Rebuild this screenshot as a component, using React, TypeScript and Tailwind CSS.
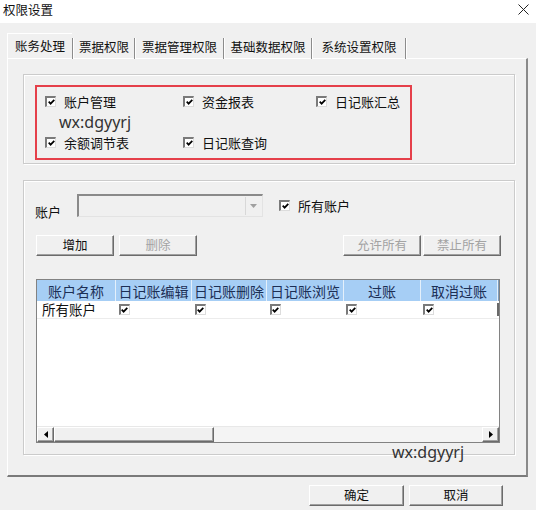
import React from 'react';

const raised =
  'border border-t-white border-l-white border-r-[#6b6b6b] border-b-[#6b6b6b] shadow-[inset_-1px_-1px_0_#a0a0a0]';

const Check: React.FC = () => (
  <span className="inline-flex shrink-0 w-[11px] h-[11px] items-center justify-center bg-white border-t-2 border-l-2 border-r border-b border-t-[#7a7a7a] border-l-[#7a7a7a] border-r-[#dcdcdc] border-b-[#dcdcdc]">
    <svg width="7" height="6" viewBox="0 0 7 6">
      <path d="M0.7 2.7 L2.6 4.7 L6.3 0.8" fill="none" stroke="#000" strokeWidth="1.7" />
    </svg>
  </span>
);

const CheckItem: React.FC<{ label: string; w?: string }> = ({ label, w = '' }) => (
  <div className={`flex items-center gap-[8px] ${w}`}>
    <Check />
    <span className="text-[13px] leading-none text-[#111]">{label}</span>
  </div>
);

const Btn: React.FC<{ label: string; disabled?: boolean; w: string }> = ({ label, disabled, w }) => (
  <div
    className={`${raised} ${w} h-[21px] flex items-center justify-center text-[12.5px] leading-none ${
      disabled ? 'text-[#a3a3a3]' : 'text-[#111]'
    }`}
  >
    {label}
  </div>
);

const TABS = [
  { t: '账务处理', w: 'w-[65px]' },
  { t: '票据权限', w: 'w-[60px]' },
  { t: '票据管理权限', w: 'w-[87px]' },
  { t: '基础数据权限', w: 'w-[86px]' },
  { t: '系统设置权限', w: 'w-[92px]' },
];

const COLS = [
  { t: '账户名称', w: 'w-[79px]' },
  { t: '日记账编辑', w: 'w-[76px]' },
  { t: '日记账删除', w: 'w-[75px]' },
  { t: '日记账浏览', w: 'w-[77px]' },
  { t: '过账', w: 'w-[77px]' },
  { t: '取消过账', w: 'w-[77px]' },
];

export default function App() {
  return (
    <div className="relative w-[536px] h-[510px] overflow-hidden bg-[#f0f0f0] font-['Noto_Sans_CJK_SC',sans-serif] text-[#111]">
      {/* title bar */}
      <div className="h-[23px] bg-white flex items-start justify-between pl-[3px] pr-[7px] pt-[3px]">
        <span className="text-[12.5px] leading-[14px]">权限设置</span>
        <svg width="11" height="11" viewBox="0 0 11 11" className="mt-[1px]">
          <path d="M0.5 0.5 L10.5 10.5 M10.5 0.5 L0.5 10.5" stroke="#222" strokeWidth="1" />
        </svg>
      </div>

      {/* tabs */}
      <div className="h-[35px] flex items-end pl-[7px]">
        {TABS.map((tab, i) => (
          <div key={tab.t} className="flex items-end">
            <div
              className={`${tab.w} flex items-center justify-center text-[12.5px] leading-none ${
                i === 0 ? 'h-[25px] border-t border-l border-white pt-[1px]' : 'h-[22px] pb-[0px]'
              }`}
            >
              {tab.t}
            </div>
            <div className="w-[2px] h-[21px] border-l border-[#8c8c8c] border-r border-r-white mb-[-1px]" />
          </div>
        ))}
      </div>

      {/* tab panel */}
      <div className="ml-[7px] w-[521px] h-[419px] border-l border-t border-l-white border-t-white border-r-2 border-b-2 border-r-[#8a8a8a] border-b-[#7a7a7a] pl-[15px] pt-[15px]">
        {/* group 1 */}
        <div className="w-[492px] h-[90px] border border-[#cbcbcb] shadow-[inset_1px_1px_0_#fff,1px_1px_0_#fff] pl-[11px] pt-[10px]">
          <div className="w-[377px] h-[75px] border-2 border-[#e5404a] pl-[8px] pt-[7px] flex flex-col">
            <div className="h-[14px] flex items-center">
              <CheckItem label="账户管理" w="w-[138px]" />
              <CheckItem label="资金报表" w="w-[133px]" />
              <CheckItem label="日记账汇总" />
            </div>
            <div className="h-[27px] flex items-center pl-[14px]">
              <span className="font-['Noto_Sans',sans-serif] text-[16px] leading-none text-[#333]">wx:dgyyrj</span>
            </div>
            <div className="h-[14px] flex items-center">
              <CheckItem label="余额调节表" w="w-[138px]" />
              <CheckItem label="日记账查询" />
            </div>
          </div>
        </div>

        {/* group 2 */}
        <div className="mt-[16px] w-[492px] h-[275px] border border-[#cbcbcb] shadow-[inset_1px_1px_0_#fff,1px_1px_0_#fff] pl-[11px] pt-[13px]">
          <div className="h-[23px] flex items-start">
            <span className="text-[13px] leading-none mt-[11px] w-[42px]">账户</span>
            <div className="w-[186px] h-[23px] border-t-2 border-l-2 border-r border-b border-t-[#8a8a8a] border-l-[#8a8a8a] border-r-[#e3e3e3] border-b-[#e3e3e3] flex justify-end p-[1px]">
              <div className="w-[16px] h-full border-l border-[#d8d8d8] flex items-center justify-center">
                <svg width="7" height="4" viewBox="0 0 7 4">
                  <path d="M0 0 L7 0 L3.5 4 Z" fill="#a0a0a0" />
                </svg>
              </div>
            </div>
            <div className="ml-[16px] h-[23px] flex items-center">
              <CheckItem label="所有账户" />
            </div>
          </div>

          <div className="mt-[18px] flex items-center pl-[1px] pr-[13px]">
            <Btn label="增加" w="w-[78px]" />
            <div className="ml-[5px]">
              <Btn label="删除" disabled w="w-[78px]" />
            </div>
            <div className="ml-auto flex gap-[2px]">
              <Btn label="允许所有" disabled w="w-[78px]" />
              <Btn label="禁止所有" disabled w="w-[78px]" />
            </div>
          </div>

          {/* grid */}
          <div className="mt-[23px] ml-[1px] w-[464px] h-[164px] border border-[#828282] bg-white flex flex-col">
            <div className="h-[21px] flex bg-[#a6cef5]">
              {COLS.map((c) => (
                <div
                  key={c.t}
                  className={`${c.w} h-full flex items-center justify-center text-[14px] leading-none text-[#1c2f55] border-r border-[#e4f0fb]`}
                >
                  {c.t}
                </div>
              ))}
              <div className="flex-1 border-l border-[#7f9dbd]" />
            </div>
            <div className="h-[18px] flex border-b border-[#ececec]">
              {COLS.map((c, i) => (
                <div key={c.t} className={`${c.w} h-full flex items-center ${i === 0 ? 'pl-[5px]' : 'pl-[3px]'}`}>
                  {i === 0 ? <span className="text-[13.5px] leading-none">所有账户</span> : <Check />}
                </div>
              ))}
              <div className="flex-1 flex items-start pt-[2px]">
                <div className="w-[2px] h-[13px] bg-[#6a6a6a]" />
              </div>
            </div>
            <div className="flex-1" />
            <div className="h-[16px] flex bg-[#f4f4f4] border-t border-[#e8e8e8]">
              <div className={`${raised} w-[17px] h-full bg-[#f0f0f0] flex items-center justify-center`}>
                <svg width="4" height="7" viewBox="0 0 4 7">
                  <path d="M4 0 L4 7 L0 3.5 Z" fill="#000" />
                </svg>
              </div>
              <div className={`${raised} w-[160px] h-full bg-[#f0f0f0]`} />
              <div className="flex-1" />
              <div className={`${raised} w-[17px] h-full bg-[#f0f0f0] flex items-center justify-center`}>
                <svg width="4" height="7" viewBox="0 0 4 7">
                  <path d="M0 0 L0 7 L4 3.5 Z" fill="#000" />
                </svg>
              </div>
            </div>
          </div>
        </div>
      </div>

      {/* dialog buttons */}
      <div className="mt-[8px] flex justify-end gap-[5px] pr-[33px]">
        <Btn label="确定" w="w-[95px]" />
        <Btn label="取消" w="w-[94px]" />
      </div>

      {/* watermark overlay */}
      <span className="absolute left-[392px] top-[442px] font-['Noto_Sans',sans-serif] text-[16px] leading-[20px] text-[#333]">
        wx:dgyyrj
      </span>
    </div>
  );
}
